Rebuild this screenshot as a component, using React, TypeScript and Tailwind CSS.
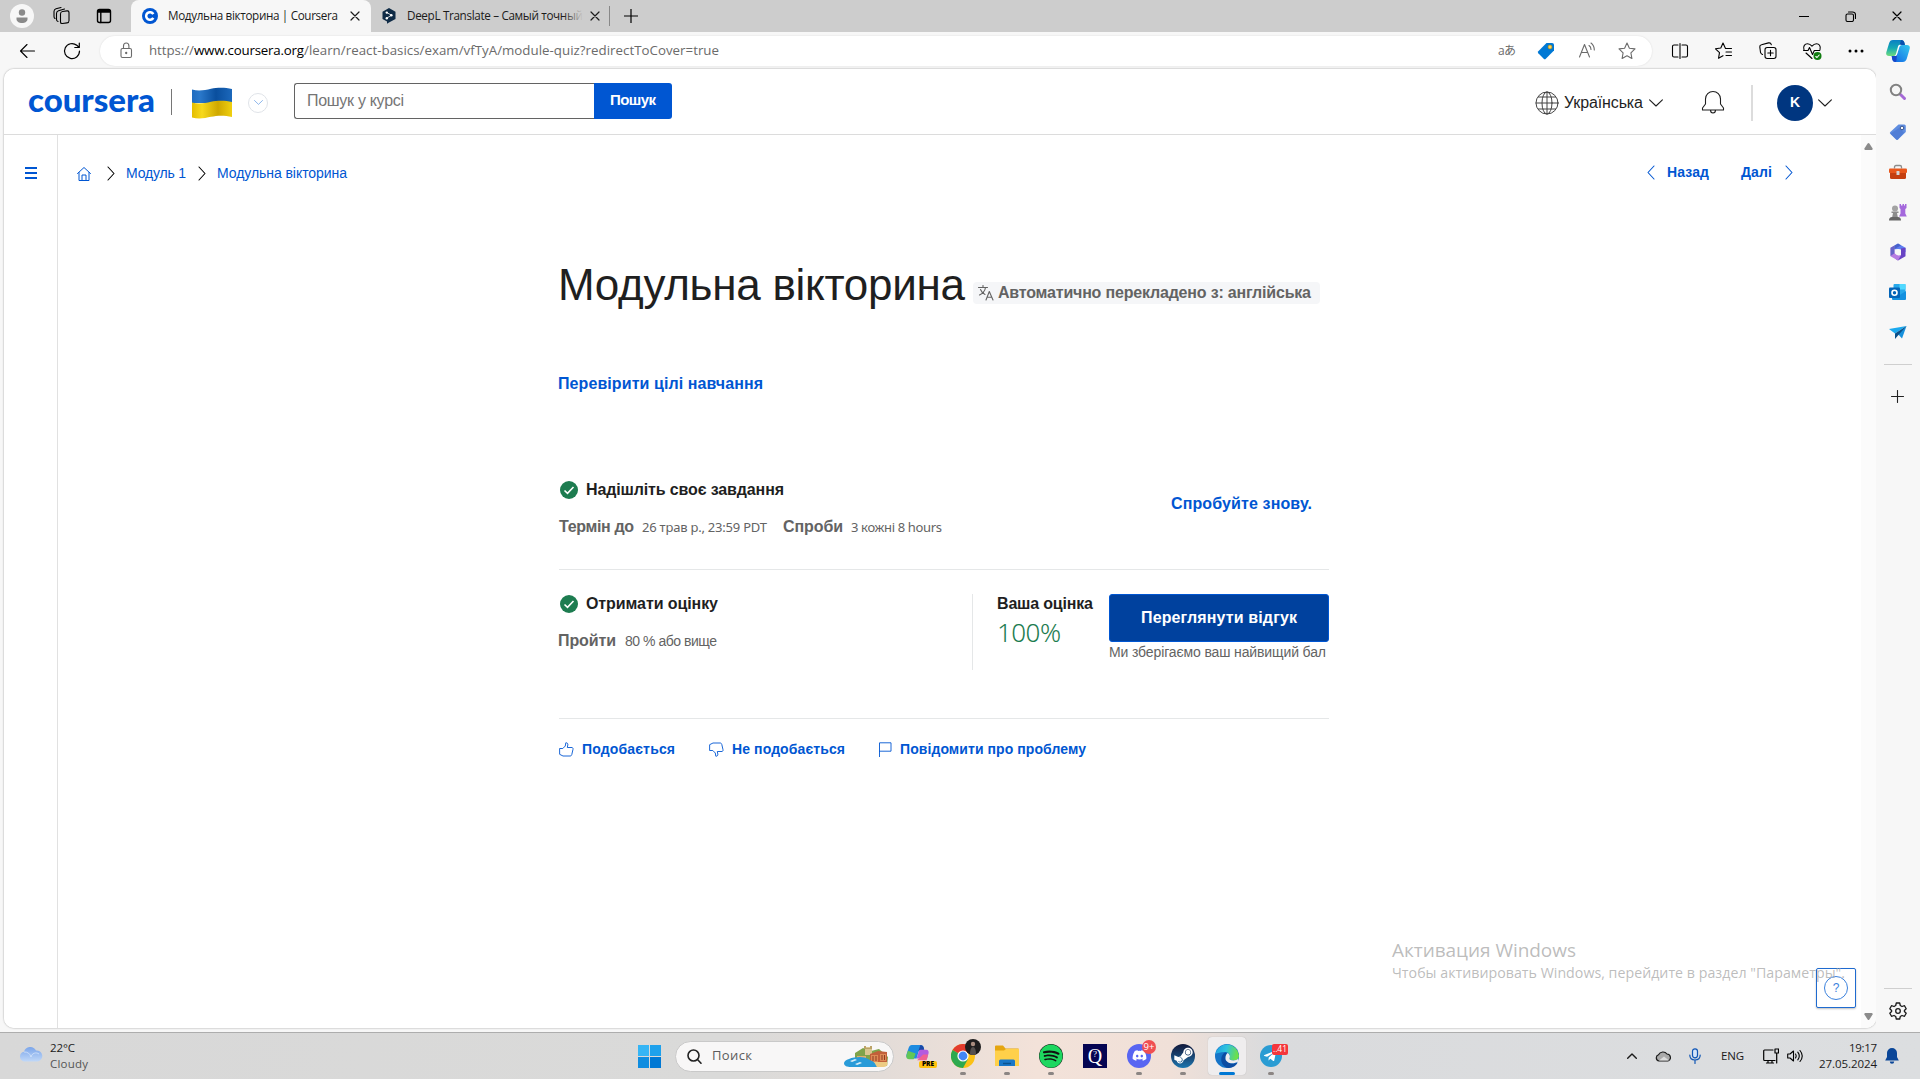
import { useLayoutEffect, useRef, useState } from "react";
import type { ReactNode } from "react";
import { FaDiscord, FaSpotify, FaSteamSymbol, FaTelegramPlane } from "react-icons/fa";

const UI = "font-['Open_Sans','Noto_Sans',sans-serif]";

/** One line of text that is tracked to fill exactly the width given by its class. */
function T({ children, className = "" }: { children: string; className?: string }) {
  const box = useRef<HTMLSpanElement>(null);
  const run = useRef<HTMLSpanElement>(null);
  const [spacing, setSpacing] = useState(0);
  useLayoutEffect(() => {
    if (!box.current || !run.current) return;
    const natural = run.current.getBoundingClientRect().width;
    const target = box.current.getBoundingClientRect().width;
    setSpacing((target - natural) / (children.length - 1));
  }, [children]);
  return (
    <span ref={box} className={"block shrink-0 whitespace-nowrap " + className}>
      <span ref={run} style={{ letterSpacing: spacing }}>{children}</span>
    </span>
  );
}

function Ico({ children, className = "size-5", box = "0 0 20 20", sw = 1.1 }: { children: ReactNode; className?: string; box?: string; sw?: number }) {
  return (
    <svg viewBox={box} className={"shrink-0 " + className} fill="none" stroke="currentColor" strokeWidth={sw} strokeLinecap="round" strokeLinejoin="round">
      {children}
    </svg>
  );
}

const Close = () => <Ico className="size-[10px]" box="0 0 10 10" sw={1.2}><path d="M1 1l8 8M9 1L1 9" /></Ico>;
const ChevDown = ({ className = "h-2 w-[14px]" }) => <Ico className={className} box="0 0 14 8"><path d="M.6.8L7 7l6.400-6.200" /></Ico>;
const ChevRight = ({ className = "h-[15px] w-2" }) => <Ico className={className} box="0 0 8 15"><path d="M1 1l6 6.500L1 14" /></Ico>;

function TabStrip() {
  return (
    <div className={"flex h-8 shrink-0 items-center bg-[#cdcdcd] text-[11.700px] text-[#1b1b1b] " + UI}>
      <div className="ml-[10px] flex size-6 items-center justify-center rounded-full bg-[#f7f7f7] text-[#8a8a8a]">
        <svg viewBox="0 0 16 16" className="size-4" fill="currentColor"><circle cx="8" cy="4.500" r="3.200" /><path d="M2.500 9.500h11v1.500c0 2.500-2.500 4-5.500 4s-5.500-1.500-5.500-4z" /></svg>
      </div>
      <Ico className="ml-[18px] size-5 text-black"><rect x="8.500" y="5.500" width="8.500" height="12" rx="2" transform="skewY(-8) translate(0 1.500)" /><path d="M6 15.500c-1-.3-1.500-1-1.500-2V7.500c0-1.500.7-2.300 2-2.700l6-1.800M3 12.500c-.8-.5-1-1-1-2V5.500c0-1.500.7-2.300 2-2.700L9 1.500" /></Ico>
      <Ico className="ml-[22px] size-5 text-black" sw={1.4}><rect x="3.500" y="3.500" width="13" height="13" rx="2" /><path d="M4 4.800h12M4 6h12" /><path d="M6.800 6v10.500" /></Ico>
      <div className="ml-[17px] flex h-8 w-60 items-center rounded-t-lg bg-[#f7f7f7]">
        <svg viewBox="0 0 16 16" className="ml-[11px] size-4"><circle cx="8" cy="8" r="8" fill="#0056d2" /><path d="M11.300 6.200A3.800 3.800 0 1 0 11.300 9.800" fill="none" stroke="#fff" strokeWidth="2.500" /></svg>
        <T className="ml-[10px] w-[170px]">Модульна вікторина | Coursera</T>
        <span className="ml-[12px]"><Close /></span>
      </div>
      <svg viewBox="0 0 14 16" className="ml-[11px] h-4 w-[14px]"><path d="M7 0l6.500 3.700v7.200L7 14.500 5 15.800v-2.400L.5 10.900V3.700z" fill="#0f2b46" /><g stroke="#fff" strokeWidth=".8"><path d="M4.800 4.500l4.600 2.700-4.600 3" fill="none" /></g><g fill="#fff"><circle cx="4.800" cy="4.600" r="1.200" /><circle cx="9.300" cy="7.300" r="1.300" /><circle cx="4.800" cy="10.200" r="1.200" /></g></svg>
      <div className="relative ml-[11px] overflow-hidden">
        <T className="w-[176px]">DeepL Translate – Самый точный</T>
        <div className="absolute inset-y-0 right-0 w-5 bg-linear-to-r from-[#cdcdcd]/0 to-[#cdcdcd]" />
      </div>
      <span className="ml-[7px]"><Close /></span>
      <div className="ml-[9px] h-5 w-px bg-[#888]" />
      <Ico className="ml-[14px] size-[14px] text-black" box="0 0 14 14" sw={1.2}><path d="M7 0v14M0 7h14" /></Ico>
      <div className="ml-auto mr-[18px] flex items-center gap-[36px] text-black">
        <Ico className="size-[10px]" box="0 0 10 10"><path d="M0 5.500h10" /></Ico>
        <Ico className="size-[11px]" box="0 0 11 11"><rect x="1" y="3" width="7.500" height="7.500" rx="1.500" /><path d="M3.500 1h4C9.500 1 10.500 2 10.500 4v3.500" /></Ico>
        <Close />
      </div>
    </div>
  );
}

function Toolbar() {
  return (
    <div className={"flex h-[37px] shrink-0 items-center bg-[#f7f7f7] text-black " + UI}>
      <Ico className="ml-[18px] size-5" sw={1.100}><path d="M16.500 10H2.500M9 3.500L2.500 10 9 16.500" /></Ico>
      <Ico className="ml-6 size-5" sw={1.200}><path d="M17.500 10A7.500 7.500 0 1 1 14.800 4.300L17 6.200M17.300 2v4.500h-4.500" /></Ico>
      <div className="ml-[18px] flex h-[30px] w-[1552px] items-center rounded-full bg-white text-[#6b6b6b] shadow-[0_0_2px_rgba(0,0,0,.12)]">
        <Ico className="ml-4 size-5" sw={1.100}><rect x="5" y="7.500" width="10.500" height="9" rx="1.500" /><path d="M7.500 7.500V5c0-2 1-3 2.700-3s2.700 1 2.700 3v2.500" /><circle cx="10.200" cy="12" r=".6" fill="currentColor" /></Ico>
        <div className="ml-[13px] flex text-[13.300px]">
          <T className="w-[45px]">https://</T>
          <T className="w-[110px] text-black">www.coursera.org</T>
          <T className="w-[415px]">/learn/react-basics/exam/vfTyA/module-quiz?redirectToCover=true</T>
        </div>
        <div className="ml-auto mr-[15px] flex items-center">
          <T className="mr-[21px] w-[18px] text-[12px] font-['Open_Sans','Noto_Sans_CJK_JP',sans-serif]">aあ</T>
          <svg viewBox="0 0 18 18" className="mr-[22px] size-[18px]"><path d="M9.500 1H15a2 2 0 0 1 2 2v5.500L8.800 16.700a1.500 1.500 0 0 1-2.100 0L1.300 11.300a1.500 1.500 0 0 1 0-2.100z" fill="#0078d4" /><circle cx="13" cy="5" r="2" fill="#ffd35c" stroke="#b58a00" strokeWidth=".6" /></svg>
          <Ico className="mr-5 size-5"><path d="M2.500 16L7.500 3.500 12.500 16M4.300 11.500h6.500M12 4.500c1.500 1 2 2.300 2 4M14 2c2 1.500 3.300 4 3.300 7" /></Ico>
          <Ico className="size-5"><path d="M10 2l2.400 5.200 5.600.7-4.100 3.900 1 5.700-4.900-2.800-4.900 2.800 1-5.700L2 7.900l5.600-.7z" /></Ico>
        </div>
      </div>
      <div className="ml-[18px] flex items-center gap-6">
        <Ico><path d="M8 4H4a1.500 1.500 0 0 0-1.500 1.500v9A1.500 1.500 0 0 0 4 16h4M12 4h4a1.500 1.500 0 0 1 1.500 1.500v9A1.500 1.500 0 0 1 16 16h-4M10 2.500v15" /></Ico>
        <Ico><path d="M17.500 7.500h-6L9 2 6.800 7 1.500 7.800l4 3.800-1 5.700 4.500-2.600M12 11h5.500M12 14.500h5.500" /></Ico>
        <Ico><rect x="7" y="6.500" width="11" height="11" rx="2.200" /><path d="M12.500 9.300v5.400M9.800 12h5.400M4.500 13.500c-1-.4-1.600-1-2-2.200L1.800 6C1.600 4.700 2.200 4 3.500 3.700l7-1.800c1.500-.3 2.400.2 2.800 1.700" /></Ico>
        <Ico><path d="M2 9C.7 5 3 2.700 5.500 2.700 7.500 2.700 9 4 10 5.200c1-1.200 2.500-2.500 4.500-2.500C17 2.700 19 5 18 8.500M1.500 9.500H6l1.500-3 3 7 1.800-4h5.500M4 12l6 5.500" /><circle cx="15.500" cy="15" r="4" fill="#107c10" stroke="none" /><path d="M13.800 15.500l1.200 1 2.200-2.500" stroke="#fff" /></Ico>
        <Ico><g fill="currentColor" stroke="none"><circle cx="4" cy="10" r="1.500" /><circle cx="10" cy="10" r="1.500" /><circle cx="16" cy="10" r="1.500" /></g></Ico>
      </div>
      <div className="ml-5"><Copilot className="size-6" /></div>
    </div>
  );
}

function Copilot({ className = "" }) {
  return (
    <svg viewBox="0 0 24 24" className={className}>
      <defs>
        <linearGradient id="cpA" x1="0" y1="0" x2="0" y2="1"><stop offset="0" stopColor="#0a7fc4" /><stop offset=".5" stopColor="#14a8b4" /><stop offset="1" stopColor="#6fdc7c" /></linearGradient>
        <linearGradient id="cpB" x1="1" y1="0" x2="0" y2="1"><stop offset="0" stopColor="#35c9ee" /><stop offset="1" stopColor="#0f62e6" /></linearGradient>
      </defs>
      <path d="M7 1h8c2 0 3 1 3.500 3l.4 2h-3c-1.500 0-2.400.8-2.800 2.200L11 15c-.4 1.300-1.200 2-2.600 2H3c-2.500 0-3.300-1.400-2.600-4L3 4.500C3.700 2 4.800 1 7 1z" fill="url(#cpA)" />
      <path d="M15 1c2 0 3 1 3.500 3l.4 2h-3c-1.500 0-2.400.8-2.800 2.200z" fill="#0a4fae" />
      <path d="M16 6h5c2.500 0 3.300 1.500 2.600 4L21 19c-.8 2.700-2 4-4.300 4H9.500c-2 0-2.800-1-3.300-3l-.5-3h2.700c1.500 0 2.200-.7 2.600-2l2-7C13.500 6.700 14.400 6 16 6z" fill="url(#cpB)" />
      <path d="M5.700 17h2.700c1.500 0 2.200-.7 2.600-2l-.5 6c-.2 1.300-.5 2-1 2-2 0-2.800-1-3.300-3z" fill="#1746c8" />
      <path d="M12 7.500c.4-1.500 1.600-2 3.500-1.500-1.500.4-2 1.500-2.400 3L11 15.500c-.4 1.200-1.200 1.700-2.800 1.500 1-.4 1.500-1 1.800-2.200z" fill="#fff" />
    </svg>
  );
}

function CourseHeader() {
  return (
    <header className="flex h-[66px] shrink-0 items-center border-b border-[#dcdcdc] bg-white pt-[2px]">
      <T className="ml-6 mt-[-7px] w-[127px] font-['Lato',sans-serif] text-[33px] leading-[40px] font-black text-[#0056d2]">coursera</T>
      <div className="ml-4 mb-px h-[26px] w-px bg-[#767676]" />
      <svg viewBox="0 0 42 32" className="ml-[19px] h-8 w-[42px]">
        <defs>
          <linearGradient id="fb" x1="0" x2="1"><stop offset="0" stopColor="#1f6cc0" /><stop offset=".2" stopColor="#2a78ca" /><stop offset=".6" stopColor="#0a4f9e" /><stop offset="1" stopColor="#1c68bb" /></linearGradient>
          <linearGradient id="fy" x1="0" x2="1"><stop offset="0" stopColor="#e4bd00" /><stop offset=".25" stopColor="#f7d91c" /><stop offset=".65" stopColor="#cfa800" /><stop offset="1" stopColor="#f0d010" /></linearGradient>
        </defs>
        <path d="M1 2.500c7 2 13 .5 19-.8s14-1.500 21 .2V16H1z" fill="url(#fb)" />
        <path d="M1 15.500c7 2 13 .5 19-.8s14-1.500 21 .2V30c-8-2-15-1.500-21-.2S8 32.500 1 30.500z" fill="url(#fy)" />
      </svg>
      <div className="ml-[15px] flex size-5 items-center justify-center rounded-full border border-[#dfe3e8] text-[#5a96e3]"><ChevDown className="h-[5px] w-[9px]" /></div>
      <div className="ml-[26px] mb-[4px] flex h-9 w-[378px] text-base">
        <div className="flex flex-1 items-center rounded-l-[3px] border border-r-0 border-[#636363] pl-3 text-[#757575]"><T className="w-[97px]">Пошук у курсі</T></div>
        <div className="flex w-[78px] items-center justify-center rounded-r-[3px] bg-[#0056d2] font-bold text-white"><T className="w-[46px] text-[15px]">Пошук</T></div>
      </div>
      <div className="ml-auto mr-[44px] flex h-9 items-center text-[#1f1f1f]">
        <Ico className="mr-[5px] size-6 text-[#444]" box="0 0 24 24" sw={1}><circle cx="12" cy="12" r="11" /><ellipse cx="12" cy="12" rx="5" ry="11" /><path d="M1 12h22M12 1v22M3.500 6h17M3.500 18h17" /></Ico>
        <T className="w-[79px] text-base">Українська</T>
        <ChevDown className="ml-[6px] h-2 w-[14px]" />
        <Ico className="ml-[38px] mb-[2px] size-6" box="0 0 24 24"><path d="M1.500 20v-2l3-4V9a7.500 7.500 0 0 1 15 0v5l3 4v2zM9.500 20c0 4 5 4 5 0" /></Ico>
        <div className="ml-[26px] h-9 w-[2px] bg-[#dcdcdc]" />
        <div className="ml-6 flex size-9 items-center justify-center rounded-full bg-[#003680] text-[14px] font-bold text-white">K</div>
        <ChevDown className="ml-[5px] h-2 w-[14px]" />
      </div>
    </header>
  );
}

const Check = () => (
  <svg viewBox="0 0 18 18" className="size-[18px] shrink-0"><circle cx="9" cy="9" r="9" fill="#1d7c50" /><path d="M4.500 9.500l3 2.800 6-6.300" fill="none" stroke="#fff" strokeWidth="1.600" /></svg>
);

const SRC = "font-['Noto_Sans',sans-serif] text-[13px]";

function CoursePage() {
  return (
    <div className="flex min-h-0 flex-1 bg-white">
      <div className="flex w-[54px] shrink-0 justify-center border-r border-[#e1e1e1] pt-8">
        <div className="flex h-3 w-3 flex-col justify-between"><div className="h-[2px] bg-[#0056d2]" /><div className="h-[2px] bg-[#0056d2]" /><div className="h-[2px] bg-[#0056d2]" /></div>
      </div>
      <div className="flex flex-1 flex-col">
        <div className="flex h-[77px] items-center pl-[18px] text-[14px] text-[#0056d2]">
          <Ico className="size-4" box="0 0 16 16" sw={1}><path d="M1.500 7.500L8 1.500l6.500 6M3 6.500V14.500h10V6.500M6 14.500V9h4v5.500" /></Ico>
          <ChevRight className="ml-[15px] h-[15px] w-2 text-black" />
          <T className="ml-[11px] w-[60px]">Модуль 1</T>
          <ChevRight className="ml-[12px] h-[15px] w-2 text-black" />
          <T className="ml-[11px] w-[130px]">Модульна вікторина</T>
          <div className="ml-auto mr-[68px] flex items-center pb-[3px] font-bold">
            <Ico className="h-[15px] w-2" box="0 0 8 15"><path d="M7 1L1 7.500 7 14" /></Ico>
            <T className="ml-[12px] w-[42px]">Назад</T>
            <T className="ml-[32px] w-[31px]">Далі</T>
            <ChevRight className="ml-[13px] h-[15px] w-2" />
          </div>
        </div>

        <main className="ml-[501px] flex w-[770px] flex-col text-base leading-6 text-[#1f1f1f]">
          <div className="flex h-[100px] items-center pt-[45px]">
            <T className="-ml-px w-[407px] text-[44px] leading-[52px]">Модульна вікторина</T>
            <div className="ml-[8px] mt-[16px] flex h-[22px] w-[347px] items-center rounded bg-[#f5f6f8] pl-[5px] font-bold text-[#636363]">
              <Ico className="mr-1 size-4" box="0 0 16 16"><path d="M.5 2.500h9M5 .5v2M7.500 2.500C7 6 4.500 8.500 1.500 10M2.500 4.500C3.500 7 5 8.500 7 9.500M8 15l3.300-8.500L15 15M9.200 12.200h4.500" /></Ico>
              <T className="w-[313px]">Автоматично перекладено з: англійська</T>
            </div>
          </div>
          <T className="-ml-px mt-[60px] w-[205px] font-bold text-[#0056d2]">Перевірити цілі навчання</T>

          <section className="mt-[82px] flex h-[92px] justify-between border-b border-[#e5e7e8]">
            <div>
              <div className="flex items-center pl-px"><Check /><T className="ml-2 w-[198px] font-bold">Надішліть своє завдання</T></div>
              <div className="mt-[12px] flex items-center text-[#636363]">
                <T className="w-[75px] font-bold">Термін до</T>
                <T className={"ml-2 mt-[1px] w-[125px] " + SRC}>26 трав р., 23:59 PDT</T>
                <T className="ml-[16px] w-[60px] font-bold">Спроби</T>
                <T className={"ml-2 mt-[1px] w-[91px] " + SRC}>3 кожні 8 hours</T>
              </div>
            </div>
            <T className="mt-[14px] mr-[17px] w-[141px] font-bold text-[#0056d2]">Спробуйте знову.</T>
          </section>

          <section className="mt-6 flex h-[125px] border-b border-[#e5e7e8]">
            <div className="w-[413px]">
              <div className="mt-[-2px] flex items-center pl-px"><Check /><T className="ml-2 w-[132px] font-bold">Отримати оцінку</T></div>
              <div className="mt-[13px] flex items-center text-[#636363]">
                <T className="-ml-px w-[58px] font-bold">Пройти</T>
                <T className="ml-[9px] w-[92px] text-[14px]">80 % або вище</T>
              </div>
            </div>
            <div className="h-[76px] w-px bg-[#e5e7e8]" />
            <div className="ml-[24px] w-[112px]">
              <T className="mt-[-2px] w-[96px] font-bold">Ваша оцінка</T>
              <T className="mt-[-2px] w-[64px] font-['Noto_Sans',sans-serif] text-[26px] leading-[36px] font-light text-[#1d7c50]">100%</T>
            </div>
            <div>
              <div className="flex h-12 w-[220px] items-center justify-center rounded-[3px] border border-[#0056d2] bg-[#00419e] font-bold text-white"><T className="w-[156px]">Переглянути відгук</T></div>
              <T className="mt-[-2px] w-[217px] text-[14px] text-[#636363]">Ми зберігаємо ваш найвищий бал</T>
            </div>
          </section>

          <div className="mt-[18px] flex items-center text-[14px] font-bold text-[#0056d2]">
            <Ico className="size-[15px]" box="0 0 15 15" sw={0.900}><path d="M1 6.500h2.800L6.300 4 6.800.8c1.600-.2 2.300 1 2 2.200L8.300 5.500h4.700c.9.200 1.200 1 1 1.800l-1.200 5.200c-.3 1-.8 1.500-1.500 1.500H4L1 12.500z" /></Ico>
            <T className="ml-[8px] w-[93px]">Подобається</T>
            <Ico className="ml-[34px] size-[15px]" box="0 0 15 15" sw={0.900}><path d="M1 8.500h2.800L6.300 11l.5 3.200c1.600.2 2.300-1 2-2.200L8.300 9.500h4.700c.9-.2 1.200-1 1-1.800l-1.200-5.200C12.500 1.500 12 1 11.300 1H4L1 2.500z" /></Ico>
            <T className="ml-[8px] w-[113px]">Не подобається</T>
            <Ico className="ml-[33px] size-[15px]" box="0 0 15 15" sw={0.900}><path d="M1.500 15V.8h11.500v8.400H1.500" /></Ico>
            <T className="ml-[7px] w-[186px]">Повідомити про проблему</T>
          </div>
        </main>
      </div>
      <div className="flex w-[15px] shrink-0 flex-col items-center justify-between bg-[#fbfbfb] pt-[8px] pb-[8px] text-[#8b8b8b]">
        <svg viewBox="0 0 10 8" className="h-[7px] w-[9px]" fill="currentColor"><path d="M4 .7Q5-.5 6 .7l3.700 5.500Q10 8 8.500 8h-7Q0 8 .3 6.200z" /></svg>
        <svg viewBox="0 0 10 8" className="h-[7px] w-[9px] rotate-180" fill="currentColor"><path d="M4 .7Q5-.5 6 .7l3.700 5.500Q10 8 8.500 8h-7Q0 8 .3 6.200z" /></svg>
      </div>
    </div>
  );
}

function SideRail() {
  return (
    <aside className="flex w-11 shrink-0 flex-col items-center bg-[#f7f7f7] pt-[14px]">
      <div className="flex flex-col items-center gap-[22px]">
        <svg viewBox="0 0 18 18" className="size-[18px]" fill="none" strokeLinecap="round"><path d="M11.500 11.500l4 4" stroke="#a569d6" strokeWidth="3" /><circle cx="7" cy="7" r="5.200" stroke="#828282" strokeWidth="2" /></svg>
        <svg viewBox="0 0 18 18" className="size-[18px]"><path d="M9.500 1.500h5.800a1.500 1.500 0 0 1 1.500 1.500v6L9 16.600a1.300 1.300 0 0 1-1.900 0L1.300 10.800a1.300 1.300 0 0 1 0-1.900z" fill="#5f8de0" /><path d="M7.200 16.600L1.300 10.800 10 5l5 4.500L9 16.600z" fill="#4874cf" opacity=".6" /><circle cx="13" cy="5" r="1.800" fill="#f7f7f7" stroke="#37548f" /></svg>
        <svg viewBox="0 0 18 18" className="size-[18px]"><path d="M5.500 5.500V4c0-1 .5-1.500 1.500-1.500h4c1 0 1.500.5 1.500 1.500v1.500" fill="none" stroke="#8c8c8c" strokeWidth="1.300" /><rect x="0" y="5.500" width="18" height="4.500" rx="1" fill="#e8571c" /><path d="M1 10h16v4.500q0 1.500-1.500 1.500h-13Q1 16 1 14.500z" fill="#c53f10" /><rect x="7.500" y="8" width="3" height="4" rx=".6" fill="#d6d6d6" /></svg>
        <svg viewBox="0 0 18 18" className="size-[18px]"><path d="M10.500 1h1.500v1.500h1.500V1h1.500v1.500H16V1h1.500v4l-1.200 1v4.500l1.500 3H10l1.500-3V6l-1-1z" fill="#a468dc" /><circle cx="6" cy="5.500" r="3" fill="#a3a3a3" /><path d="M2.500 8.500h7v1.500H8l.8 4H3.200l.8-4H2.500z" fill="#8c8c8c" /><path d="M0 17.500q0-3.500 3-3.500h6q3 0 3 3.500z" fill="#666" /></svg>
        <svg viewBox="0 0 18 18" className="size-[18px]"><path d="M9 .5l7.500 4.300v4.500L12 6.500 5.500 6.200V2.600z" fill="#5d7df0" /><path d="M16.500 4.800v8.400L9 17.500l-3-2 6-3.300V5.500z" fill="#6844c4" /><path d="M1.500 4.800l4-2.300v7.500L9 12.500l3-.3-3 5.300-7.500-4.300z" fill="#b77be2" /><path d="M9 .5l3 1.800-6.500 4v4L1.500 13V4.800z" fill="#3c55b8" opacity=".65" /><circle cx="9" cy="9" r="3" fill="#f7f7f7" /></svg>
        <svg viewBox="0 0 18 18" className="size-[18px]"><rect x="4.500" y="1" width="12" height="11" rx="1" fill="#28a8ea" /><path d="M10.500 1h6v5.500h-6z" fill="#50d9ff" /><path d="M3 8l7 4.500L17 8v8q0 1-1 1H4q-1 0-1-1z" fill="#1490df" /><rect x="0" y="4.500" width="11" height="10.500" rx="1" fill="#0364b8" /><circle cx="5.500" cy="9.700" r="2.500" fill="none" stroke="#fff" strokeWidth="1.600" /></svg>
        <svg viewBox="0 0 18 18" className="size-[18px]"><path d="M0 6L17.500 3 6 10.500z" fill="#1ba9ee" /><path d="M17.500 3L13 15.500 8.500 10.500z" fill="#1690dc" /><path d="M17.500 3L6 10.500V16l3-3.500z" fill="#0b4f88" /></svg>
      </div>
      <div className="mt-[23px] h-px w-7 bg-[#cfcfcf]" />
      <Ico className="mt-[25px] mr-px size-[13px] text-[#222]" box="0 0 13 13"><path d="M6.500.5v12M.5 6.500h12" /></Ico>
      <div className="mt-auto h-px w-7 bg-[#cfcfcf]" />
      <Ico className="mt-[13px] mb-[12px] size-[18px] text-[#1b1b1b]" box="0 0 18 18" sw={1.300}><path d="M7.300 1h3.400l.6 2.500 1.700 1 2.500-.8 1.700 3L15.400 8.500v1l1.800 1.800-1.700 3-2.500-.8-1.700 1-.6 2.500H7.300l-.6-2.500-1.700-1-2.500.8-1.700-3L2.600 9.500v-1L.8 6.700l1.700-3 2.500.8 1.700-1z" /><circle cx="9" cy="9" r="2.300" /></Ico>
    </aside>
  );
}

function TaskItem({ children, mark = "w-[6px] bg-[#8b8583]", box = "" }: { children: ReactNode; mark?: string; box?: string }) {
  return (
    <div className={"relative flex h-[38px] w-[38px] items-center justify-center rounded " + box}>
      {children}
      <div className={"absolute bottom-0 h-[3px] rounded-full " + mark} />
    </div>
  );
}

function Taskbar() {
  return (
    <footer className={"flex h-[47px] shrink-0 items-center border-t border-[#adadad] bg-[linear-gradient(90deg,#d8d8d8_0%,#dadad9_38%,#e3dcd8_46%,#f3e2d9_54%,#f0e0d8_61%,#dadbdd_66%,#dcdee0_100%)] text-[11.500px] text-[#1b1b1b] " + UI}>
      <div className="flex w-[638px] shrink-0 items-center pl-[19px]">
        <svg viewBox="0 0 24 16" className="mt-[-4px] h-4 w-6"><defs><linearGradient id="cl" x1="0" y1="0" x2="0" y2="1"><stop offset="0" stopColor="#7ba5ea" /><stop offset="1" stopColor="#c0d8f8" /></linearGradient></defs><path d="M5 15.500a5 5 0 0 1 0-9.800 6.500 6.500 0 0 1 12-1.200 5.600 5.600 0 0 1 2 11z" fill="url(#cl)" /><path d="M5 6a7 7 0 0 1 7 5 5 5 0 0 1 8-3" fill="none" stroke="#dce9fc" strokeWidth="1" opacity=".7" /></svg>
        <div className="ml-[7px] leading-4"><T className="w-[25px]">22°C</T><T className="w-[38px] text-[#555]">Cloudy</T></div>
      </div>
      <div className="grid size-[23px] shrink-0 grid-cols-2 gap-px"><div className="bg-[#35b5f5]" /><div className="bg-[#1ea1ec]" /><div className="bg-[#0f8de0]" /><div className="bg-[#0078d4]" /></div>
      <div className="ml-[14px] flex h-[31px] w-[219px] shrink-0 items-center rounded-full border border-[#c9c9c9] bg-[#f8f7f7] text-[13px] text-[#5c5c5c]">
        <Ico className="ml-[11px] size-[15px] text-[#222]" box="0 0 15 15" sw={1.600}><circle cx="6.500" cy="6.500" r="5.500" /><path d="M10.500 10.500l3.500 3.700" /></Ico>
        <T className="ml-[10px] w-[40px]">Поиск</T>
        <svg viewBox="0 0 46 24" className="ml-auto mr-[4px] h-6 w-[46px]">
          <path d="M12 9l8-5 8 3 8-2 9 8-1 9-20 1-12-7z" fill="#7fa34a" /><path d="M22 3h7v8h-7z" fill="#d9c690" /><path d="M21 2h2v2h4V2h2v3h-8z" fill="#bba368" /><path d="M27 10l8-3 9 1v10l-7 3-10-2z" fill="#c2603a" /><path d="M28 11h7v7h-7zM37 10h6v7h-6z" fill="#de8a55" /><path d="M30 12v5M33 12v5M39 11v5M41.500 11v5" stroke="#8d3c22" /><path d="M14 12h9v5h-9z" fill="#e0b06b" /><path d="M28 18l16 0q2 4-3 5H26z" fill="#eccb83" />
          <path d="M1 19c0-3 8-6 16-6 7 0 9 3 12 4s4 5 5 6H8c-4 0-7-1-7-4z" fill="#299bd8" /><path d="M7 17l5-2 2 1-5 2zM12 20l5-2 2 1-5 2z" fill="#d8eef8" />
        </svg>
      </div>
      <div className="ml-[6px] flex shrink-0 items-center gap-[6px] pb-px">
        <div className="relative flex size-[38px] items-center justify-center pr-1">
          <svg viewBox="0 0 24 24" className="size-[23px]"><path d="M6 1h9c2 0 3 1 3.500 3l.5 2h-3c-2 0-2.500 1-3 2.500L11 15H3c-2.500 0-3-2-2.500-4L3 3.500C3.500 2 4.500 1 6 1z" fill="#1d8be0" /><path d="M2 7l-1.500 5c-.5 2 .5 4 3 4H8l2-6z" fill="#62c656" /><path d="M15 1c2 0 3 1 3.500 3l.5 2-6 1z" fill="#1a49a8" /><path d="M15 6h6c2.500 0 3 2 2.500 4L22 15H11l1-3 1-3c.5-2 1-3 2-3z" fill="#b35be0" /><path d="M18 11h5l-1.500 6h-10z" fill="#f06292" /></svg>
          <div className="absolute right-[1px] bottom-[7px] flex h-[7px] w-[18px] items-center justify-center rounded-[2px] bg-[#ffc20e] text-[6.500px] leading-none font-extrabold text-black">PRE</div>
        </div>
        <TaskItem>
          <svg viewBox="0 0 24 24" className="size-6"><circle cx="12" cy="12" r="12" fill="#fbc116" /><path d="M12 12L1.600 6A12 12 0 0 1 22.400 6z" fill="#e33b2e" /><path d="M1.600 6A12 12 0 0 0 12 24l5-9-5-3z" fill="#2da94f" /><circle cx="12" cy="12" r="5.600" fill="#fff" /><circle cx="12" cy="12" r="4.400" fill="#4286f5" /></svg>
          <div className="absolute top-[2px] right-[1px] flex size-4 justify-center overflow-hidden rounded-full bg-[#1f1e1f]"><svg viewBox="0 0 16 16" className="size-4"><circle cx="8" cy="5" r="2.200" fill="#a98d80" /><path d="M5 16q0-8 3-8t3 8z" fill="#55504f" /></svg></div>
        </TaskItem>
        <TaskItem><svg viewBox="0 0 24 22" className="h-[22px] w-6"><path d="M0 1.500Q0 .5 1 .5h7l2.500 3H23q1 0 1 1V21H0z" fill="#e5a50f" /><path d="M0 5.500h9l2-1.500h13V21H0z" fill="#ffd04a" /><path d="M4 21v-5q0-1.500 1.500-1.500h13q1.500 0 1.500 1.500v5z" fill="#1a78c8" /><path d="M8 18.500h8" stroke="#0c538e" strokeWidth="1.500" /></svg></TaskItem>
        <TaskItem><div className="rounded-full bg-[#111]"><FaSpotify className="size-6 text-[#1ed760]" /></div></TaskItem>
        <div className="flex size-[38px] items-center justify-center">
          <div className="relative flex size-6 items-center justify-center bg-[#050553] font-['Liberation_Serif',serif] text-[20px] leading-none text-white">
            Q<span className="absolute top-[6px] text-[9px] leading-none">?</span>
          </div>
        </div>
        <TaskItem>
          <div className="flex size-6 items-center justify-center rounded-full bg-[#5865f2]"><FaDiscord className="size-[15px] text-white" /></div>
          <div className="absolute top-[3px] right-[2px] flex h-[14px] w-[14px] items-center justify-center rounded-full bg-[#f04f52] text-[9.500px] leading-none text-white">9+</div>
        </TaskItem>
        <TaskItem><div className="flex size-6 items-center justify-center overflow-hidden rounded-full bg-linear-to-b from-[#10183a] to-[#1a77b0]"><FaSteamSymbol className="size-[21px] text-white" /></div></TaskItem>
        <TaskItem box="bg-[#efedee] shadow-[0_0_1px_#aaa]" mark="w-4 bg-[#0078d4]">
          <svg viewBox="0 0 24 24" className="size-6"><defs><linearGradient id="eg" x1="0" y1="0" x2="1" y2=".2"><stop offset="0" stopColor="#1b9de2" /><stop offset=".5" stopColor="#2fc3df" /><stop offset="1" stopColor="#6ce04b" /></linearGradient></defs><circle cx="12" cy="12" r="12" fill="#1574c8" /><path d="M.3 10A12 12 0 0 1 24 11.500c0 3-2.200 5-5.500 5-3 0-4.500-1.300-4-2.300 1-1.700 1-6.200-5-6.200-4 0-7 1-9.200 2z" fill="url(#eg)" /><path d="M9 9c-5 5-3 13 4 15 4 .2 8-2 9.700-5.500-4 2-11 1-12.200-4C10 12 11 10 12.500 9 11 8.300 10 8.300 9 9z" fill="#0c4da2" /><path d="M12.500 9c2 .8 3 3.200 2 5.200-.5 1 1 2.300 4 2.300 2 0 3.500-.5 4.400-1.700l.3 2.700C18 21 10 19 10.500 14c0-2 .8-4 2-5z" fill="#efedee" /></svg>
        </TaskItem>
        <TaskItem>
          <div className="flex size-[22px] items-center justify-center rounded-full bg-[#2a9cd3]"><FaTelegramPlane className="mr-[2px] size-[14px] text-white" /></div>
          <div className="absolute top-[7px] left-[20px] flex h-[11px] w-4 items-center justify-center rounded-[2px] bg-[#f5363b] text-[8.500px] leading-none text-white">..41</div>
        </TaskItem>
      </div>
      <div className="mr-[21px] ml-auto flex items-center">
        <Ico className="h-[6px] w-[10px]" box="0 0 10 6" sw={1.400}><path d="M.7 5.300L5 1l4.300 4.300" /></Ico>
        <Ico className="ml-[18px] h-3 w-4" box="0 0 16 12" sw={1.200}><path d="M4 11a3.200 3.200 0 0 1-.5-6.200A5 5 0 0 1 12 4a3.600 3.600 0 0 1 1 7z" fill="#aaa" /><path d="M4 10.500l5-4 5 4z" fill="#ddd" stroke="none" /></Ico>
        <Ico className="ml-[18px] h-4 w-3 text-[#0f55b5]" box="0 0 12 16" sw={1.200}><rect x="3.500" y=".8" width="5" height="9" rx="2.500" fill="#d4e4fa" /><path d="M.8 7c0 3 2 5 5.200 5s5.200-2 5.200-5M6 12v3.500" /></Ico>
        <T className="ml-[20px] w-[23px]">ENG</T>
        <Ico className="ml-[19px] size-4 text-black" box="0 0 16 16" sw={1.200}><path d="M10 2H1.500Q.7 2 .7 3v8.500q0 1 .8 1H12M5 12.500v2.500M9 12.500v2.500M3.500 15h7" /><path d="M12 1h3.500v4H12zM13.700 5v10" /></Ico>
        <Ico className="ml-[8px] size-4 text-black" box="0 0 16 16"><path d="M.7 6v4H3l3.500 3V3L3 6zM8.500 6c.8 1.200.8 2.800 0 4M10.800 4.200c1.800 2.300 1.800 5.300 0 7.600M13 2.500c2.700 3.300 2.700 7.700 0 11" /></Ico>
        <div className="ml-[16px] flex flex-col items-end leading-4"><T className="w-[28px]">19:17</T><T className="w-[58px]">27.05.2024</T></div>
        <svg viewBox="0 0 14 16" className="ml-2 h-4 w-[14px]" fill="#0a4698"><path d="M7 0a5 5 0 0 1 5 5v4l1.800 3.500H.2L2 9V5a5 5 0 0 1 5-5zM4.800 13.500h4.400a2.200 2.200 0 0 1-4.400 0z" /></svg>
      </div>
    </footer>
  );
}

export default function App() {
  return (
    <div className="relative flex h-[1079px] w-[1920px] flex-col overflow-hidden bg-[#f7f7f7] font-['Liberation_Sans',Arial,sans-serif]">
      <TabStrip />
      <Toolbar />
      <div className="flex h-[963px] shrink-0">
        <div className="ml-1 mb-1 flex w-[1872px] flex-col overflow-hidden rounded-[10px] bg-white shadow-[0_0_2px_rgba(0,0,0,.4)]">
          <CourseHeader />
          <CoursePage />
        </div>
        <SideRail />
      </div>
      <Taskbar />
      <div className="absolute top-[968px] left-[1816px] flex size-10 items-center justify-center rounded-[2px] border border-[#1f6bd0] bg-white text-[#3c82dd] shadow-[0_1px_2px_rgba(0,0,0,.25)]">
        <div className="flex size-6 items-center justify-center rounded-full border border-[#3c82dd] text-[12px]">?</div>
      </div>
      <div className={"absolute top-[936px] left-[1392px] text-[#a0a0a0]/70 " + UI}>
        <T className="w-[184px] text-[19px] leading-[28px]">Активация Windows</T>
        <T className="w-[453px] text-[14.200px] leading-[18px]">Чтобы активировать Windows, перейдите в раздел "Параметры".</T>
      </div>
    </div>
  );
}
